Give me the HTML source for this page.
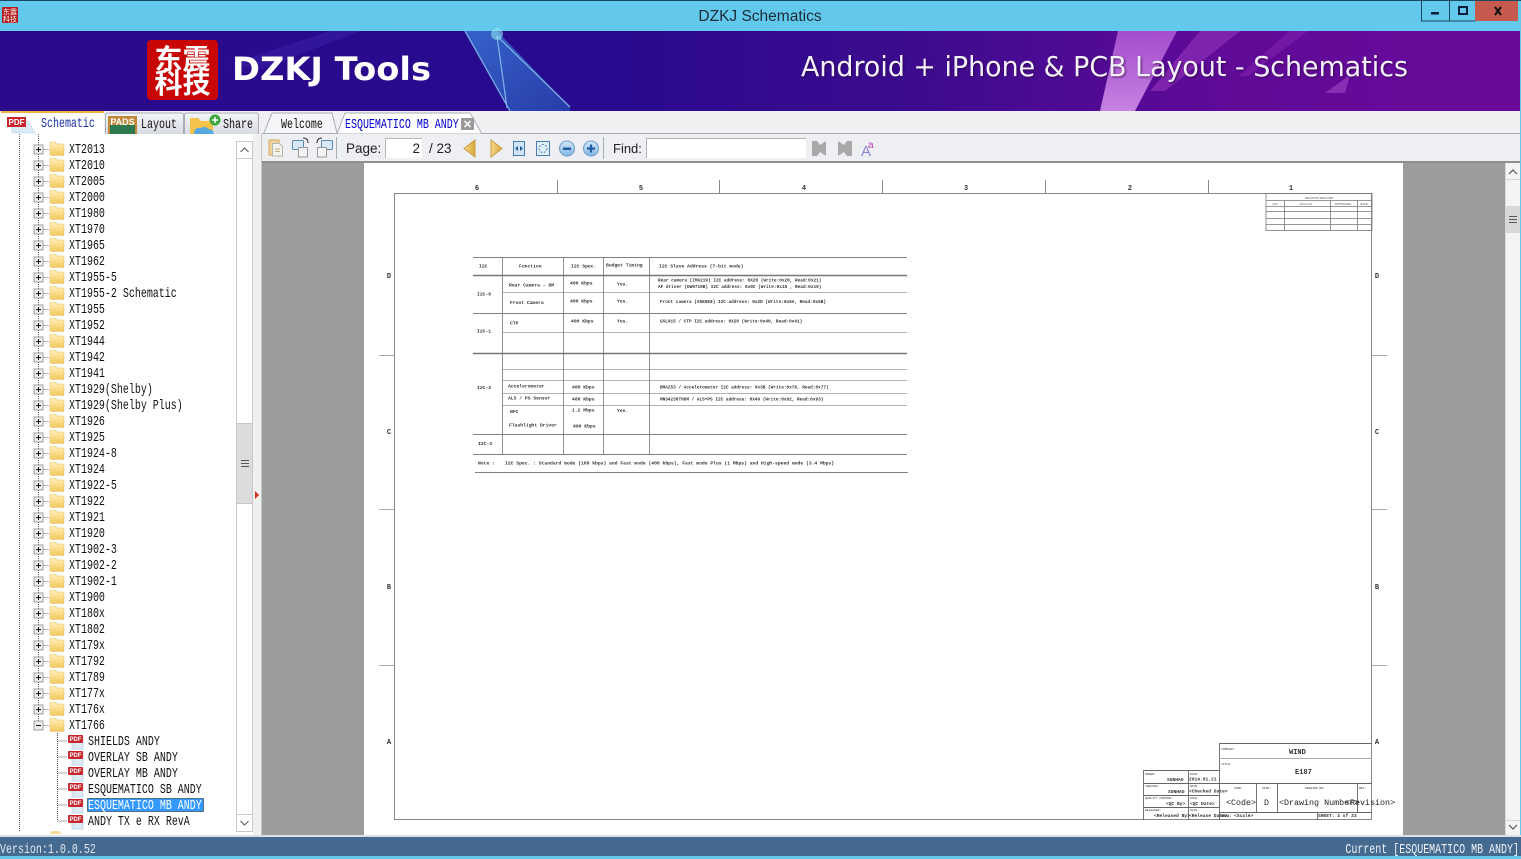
<!DOCTYPE html>
<html><head><meta charset="utf-8"><title>DZKJ Schematics</title>
<style>
html,body{margin:0;padding:0;background:#fff;width:1521px;height:859px;overflow:hidden}
svg{display:block}
.m{font-family:"Liberation Mono",monospace;font-size:13.5px;fill:#111;transform-box:fill-box;transform-origin:0 50%;transform:scaleX(.74)}
.me{transform-origin:100% 50%}
.s{font-family:"Liberation Sans",sans-serif}
.t{font-family:"Liberation Mono",monospace;fill:#333;font-weight:bold}
</style></head><body>
<svg width="1521" height="859" viewBox="0 0 1521 859" xmlns="http://www.w3.org/2000/svg">
<defs>
<linearGradient id="ban" x1="0" x2="1" y1="0" y2="0"><stop offset="0" stop-color="#2c0a8c"/><stop offset=".38" stop-color="#270a8e"/><stop offset=".6" stop-color="#3c0b8f"/><stop offset=".8" stop-color="#5f0a98"/><stop offset="1" stop-color="#6a0a9b"/></linearGradient>
<linearGradient id="fold" x1="0" x2="0" y1="0" y2="1"><stop offset="0" stop-color="#fff0b8"/><stop offset="1" stop-color="#f5c860"/></linearGradient>
<linearGradient id="gtab" x1="0" x2="0" y1="0" y2="1"><stop offset="0" stop-color="#f4f5f8"/><stop offset="1" stop-color="#d8dbe2"/></linearGradient>
<linearGradient id="orb" x1="0" x2="0" y1="0" y2="1"><stop offset="0" stop-color="#d5e8f8"/><stop offset="1" stop-color="#7fb6e4"/></linearGradient>
<linearGradient id="arr" x1="0" x2="1" y1="0" y2="0"><stop offset="0" stop-color="#f7dc8c"/><stop offset="1" stop-color="#d8a63c"/></linearGradient>
<linearGradient id="pink" x1="0" x2="0" y1="0" y2="1"><stop offset="0" stop-color="#a850d0"/><stop offset="1" stop-color="#cc88e6"/></linearGradient>
<linearGradient id="tri" x1="0" x2="1" y1="0" y2="1"><stop offset="0" stop-color="#3a78d8"/><stop offset="1" stop-color="#2848b0"/></linearGradient>
<g id="f"><path d="M0 -6q0 -1 1 -1h4l2 2h6q1 0 1 1v9.500q0 1 -1 1h-12q-1 0 -1 -1z" fill="url(#fold)" stroke="#e2c070" stroke-width=".6"/></g>
<g id="p"><rect x="-4.500" y="-4.500" width="9" height="9" fill="#ececec" stroke="#a0a0a0"/><path d="M-2.500 0h5M0 -2.500v5" stroke="#111"/><path d="M5 0h6" stroke="#777" stroke-dasharray="1 1"/></g>
<g id="d"><rect x="4" y="-4" width="11" height="13" fill="#dbeaf5" stroke="#a8c6de" stroke-width=".6"/><rect x="0" y="-5" width="15" height="8" rx="1" fill="#c8242c"/><text x="7.500" y="1" font-size="6" font-weight="bold" text-anchor="middle" fill="#fff" class="s">PDF</text></g>
</defs>

<rect width="1521" height="859" fill="#f0f0f0"/>
<!-- title bar -->
<rect width="1521" height="31" fill="#62c9ec"/>
<rect width="1521" height="1" fill="#174a62"/>
<rect x="2" y="7" width="16" height="16" rx="1" fill="#b51a1a"/>
<text x="10" y="14" font-size="7" fill="#fff" text-anchor="middle" font-family="'Liberation Sans','Noto Sans CJK SC',sans-serif">东震</text>
<text x="10" y="21.500" font-size="7" fill="#fff" text-anchor="middle" font-family="'Liberation Sans','Noto Sans CJK SC',sans-serif">科技</text>
<text x="760" y="21" font-size="15.500" text-anchor="middle" fill="#1c2c38" class="s">DZKJ Schematics</text>
<rect x="1475" y="1" width="43" height="20" fill="#c75a4e"/>
<path d="M1421.500 1v20h54M1449.500 1v20" fill="none" stroke="#18465c"/>
<rect x="1431" y="12" width="8" height="2.500" fill="#0c1c3c"/>
<rect x="1459" y="7" width="8" height="7" fill="none" stroke="#0c1c3c" stroke-width="2"/>
<path d="M1495 7l6 8M1501 7l-6 8" stroke="#111" stroke-width="2"/>

<!-- banner -->
<rect y="31" width="1521" height="80" fill="url(#ban)"/>
<path d="M230 64L330 31h30L260 70z" fill="#3a20a8" opacity=".5"/>
<path d="M465 31h32L570 107V111H510z" fill="url(#tri)" opacity=".8"/>
<path d="M465 31L510 111M497 36L507 108M497 36L570 107" stroke="#8cc8f4" stroke-width="1.300" opacity=".8" fill="none"/>
<circle cx="497" cy="34" r="6" fill="#8ee8f0" opacity=".6"/>
<path d="M1118 31h59l-42 80h-35z" fill="url(#pink)" opacity=".95"/>
<path d="M1200 31h40l-75 60h-15z" fill="#8a2cb4" opacity=".75"/>
<path d="M1290 31h18l-60 45h-10z" fill="#7a1cac" opacity=".7"/>
<path d="M1325 93l25 -18 -5 18z" fill="#8e38bc" opacity=".8"/>
<rect x="147" y="40" width="71" height="60" rx="4" fill="#c80606"/>
<text x="182.500" y="69" font-size="28" font-weight="bold" fill="#fff" text-anchor="middle" font-family="'Noto Sans CJK SC',sans-serif">东震</text>
<text x="182.500" y="93" font-size="28" font-weight="bold" fill="#fff" text-anchor="middle" font-family="'Noto Sans CJK SC',sans-serif">科技</text>
<text x="232" y="80" font-size="32" font-weight="bold" fill="#fff" font-family="'DejaVu Sans',sans-serif" textLength="199" lengthAdjust="spacingAndGlyphs">DZKJ Tools</text>
<text x="801" y="76" font-size="27.500" fill="#f4f0fa" font-family="'DejaVu Sans',sans-serif" textLength="607" lengthAdjust="spacingAndGlyphs" style="filter:drop-shadow(1px 1px 1px rgba(40,0,60,.7))">Android + iPhone &amp; PCB Layout - Schematics</text>

<!-- tabs strip -->
<rect y="111" width="1521" height="23" fill="#f0f0f2"/>
<path d="M262 133.500H1521" stroke="#a8aeb6"/>
<path d="M0 134V113q0 -2 2 -2h100q2 0 2 2v21z" fill="#fff"/>
<rect x="1" y="111" width="103" height="2" fill="#f0b040"/>
<path d="M105.500 134V115q0 -2 2 -2h74q2 0 2 2v19M184.500 134V115q0 -2 2 -2h70q2 0 2 2v19" fill="url(#gtab)" stroke="#a8aeb6"/>
<path d="M12 121h16l7 12H12z" fill="#dceaf6" stroke="#b8cfe2" stroke-width=".6"/>
<rect x="7" y="117" width="19" height="10" fill="#c8242c"/><text x="16.500" y="125" font-size="8" font-weight="bold" text-anchor="middle" fill="#fff" class="s">PDF</text>
<text x="41" y="127" class="m" style="fill:#1a2ea0">Schematic</text>
<rect x="108" y="116" width="29" height="18" fill="#c08838"/><rect x="110" y="125" width="25" height="9" fill="#2e7a50"/>
<text x="122.500" y="125" font-size="9" font-weight="bold" text-anchor="middle" fill="#fff" class="s">PADS</text>
<text x="141" y="128" class="m">Layout</text>
<path d="M190 118h8l3 3h12v13h-23z" fill="#f5c24a"/><path d="M194 134q0 -7 7 -6q4 -3 7 1q5 0 6 5z" fill="#55a8e0"/>
<circle cx="215" cy="120" r="5.500" fill="#3aa83a"/><path d="M212 120h6M215 117v6" stroke="#fff" stroke-width="1.500"/>
<text x="223" y="128" class="m">Share</text>
<path d="M264 133l8 -20h60l5 20" fill="#f6f6f8" stroke="#a8aeb6"/>
<text x="281" y="128" class="m">Welcome</text>
<path d="M337 134l8 -21h125l12 21z" fill="#fff" stroke="#a8aeb6"/>
<text x="345" y="128" class="m" style="fill:#0000d0">ESQUEMATICO MB ANDY</text>
<rect x="461" y="118" width="13" height="12" fill="#9a9a9a"/><path d="M464.500 121l6 6M470.500 121l-6 6" stroke="#fff" stroke-width="1.500"/>

<!-- left panel -->
<rect y="134" width="262" height="702" fill="#fff"/>
<rect x="253" y="134" width="9" height="702" fill="#f0f0f0"/>
<path d="M261.500 134V836" stroke="#c8c8c8"/>
<path d="M255 491l4 4 -4 4z" fill="#d83020"/>
<path d="M19.500 134V832M38.500 134V725M57.500 733V821M57.500 741h10M57.500 757h10M57.500 773h10M57.500 789h10M57.500 805h10M57.500 821h10" stroke="#555" stroke-dasharray="1 1" fill="none"/>
<g>
<use href="#p" x="38.500" y="149.500"/><use href="#f" x="50" y="149"/><text x="69" y="153" class="m">XT2013</text>
<use href="#p" x="38.500" y="165.500"/><use href="#f" x="50" y="165"/><text x="69" y="169" class="m">XT2010</text>
<use href="#p" x="38.500" y="181.500"/><use href="#f" x="50" y="181"/><text x="69" y="185" class="m">XT2005</text>
<use href="#p" x="38.500" y="197.500"/><use href="#f" x="50" y="197"/><text x="69" y="201" class="m">XT2000</text>
<use href="#p" x="38.500" y="213.500"/><use href="#f" x="50" y="213"/><text x="69" y="217" class="m">XT1980</text>
<use href="#p" x="38.500" y="229.500"/><use href="#f" x="50" y="229"/><text x="69" y="233" class="m">XT1970</text>
<use href="#p" x="38.500" y="245.500"/><use href="#f" x="50" y="245"/><text x="69" y="249" class="m">XT1965</text>
<use href="#p" x="38.500" y="261.500"/><use href="#f" x="50" y="261"/><text x="69" y="265" class="m">XT1962</text>
<use href="#p" x="38.500" y="277.500"/><use href="#f" x="50" y="277"/><text x="69" y="281" class="m">XT1955-5</text>
<use href="#p" x="38.500" y="293.500"/><use href="#f" x="50" y="293"/><text x="69" y="297" class="m">XT1955-2 Schematic</text>
<use href="#p" x="38.500" y="309.500"/><use href="#f" x="50" y="309"/><text x="69" y="313" class="m">XT1955</text>
<use href="#p" x="38.500" y="325.500"/><use href="#f" x="50" y="325"/><text x="69" y="329" class="m">XT1952</text>
<use href="#p" x="38.500" y="341.500"/><use href="#f" x="50" y="341"/><text x="69" y="345" class="m">XT1944</text>
<use href="#p" x="38.500" y="357.500"/><use href="#f" x="50" y="357"/><text x="69" y="361" class="m">XT1942</text>
<use href="#p" x="38.500" y="373.500"/><use href="#f" x="50" y="373"/><text x="69" y="377" class="m">XT1941</text>
<use href="#p" x="38.500" y="389.500"/><use href="#f" x="50" y="389"/><text x="69" y="393" class="m">XT1929(Shelby)</text>
<use href="#p" x="38.500" y="405.500"/><use href="#f" x="50" y="405"/><text x="69" y="409" class="m">XT1929(Shelby Plus)</text>
<use href="#p" x="38.500" y="421.500"/><use href="#f" x="50" y="421"/><text x="69" y="425" class="m">XT1926</text>
<use href="#p" x="38.500" y="437.500"/><use href="#f" x="50" y="437"/><text x="69" y="441" class="m">XT1925</text>
<use href="#p" x="38.500" y="453.500"/><use href="#f" x="50" y="453"/><text x="69" y="457" class="m">XT1924-8</text>
<use href="#p" x="38.500" y="469.500"/><use href="#f" x="50" y="469"/><text x="69" y="473" class="m">XT1924</text>
<use href="#p" x="38.500" y="485.500"/><use href="#f" x="50" y="485"/><text x="69" y="489" class="m">XT1922-5</text>
<use href="#p" x="38.500" y="501.500"/><use href="#f" x="50" y="501"/><text x="69" y="505" class="m">XT1922</text>
<use href="#p" x="38.500" y="517.500"/><use href="#f" x="50" y="517"/><text x="69" y="521" class="m">XT1921</text>
<use href="#p" x="38.500" y="533.500"/><use href="#f" x="50" y="533"/><text x="69" y="537" class="m">XT1920</text>
<use href="#p" x="38.500" y="549.500"/><use href="#f" x="50" y="549"/><text x="69" y="553" class="m">XT1902-3</text>
<use href="#p" x="38.500" y="565.500"/><use href="#f" x="50" y="565"/><text x="69" y="569" class="m">XT1902-2</text>
<use href="#p" x="38.500" y="581.500"/><use href="#f" x="50" y="581"/><text x="69" y="585" class="m">XT1902-1</text>
<use href="#p" x="38.500" y="597.500"/><use href="#f" x="50" y="597"/><text x="69" y="601" class="m">XT1900</text>
<use href="#p" x="38.500" y="613.500"/><use href="#f" x="50" y="613"/><text x="69" y="617" class="m">XT180x</text>
<use href="#p" x="38.500" y="629.500"/><use href="#f" x="50" y="629"/><text x="69" y="633" class="m">XT1802</text>
<use href="#p" x="38.500" y="645.500"/><use href="#f" x="50" y="645"/><text x="69" y="649" class="m">XT179x</text>
<use href="#p" x="38.500" y="661.500"/><use href="#f" x="50" y="661"/><text x="69" y="665" class="m">XT1792</text>
<use href="#p" x="38.500" y="677.500"/><use href="#f" x="50" y="677"/><text x="69" y="681" class="m">XT1789</text>
<use href="#p" x="38.500" y="693.500"/><use href="#f" x="50" y="693"/><text x="69" y="697" class="m">XT177x</text>
<use href="#p" x="38.500" y="709.500"/><use href="#f" x="50" y="709"/><text x="69" y="713" class="m">XT176x</text>
<rect x="34" y="721" width="9" height="9" fill="#ececec" stroke="#a0a0a0"/><path d="M36 725.500h5" stroke="#111"/><path d="M43.500 725.500h6" stroke="#777" stroke-dasharray="1 1"/><use href="#f" x="50" y="725"/><text x="69" y="729" class="m">XT1766</text>
<use href="#d" x="68" y="740"/><text x="88" y="745" class="m">SHIELDS ANDY</text>
<use href="#d" x="68" y="756"/><text x="88" y="761" class="m">OVERLAY SB ANDY</text>
<use href="#d" x="68" y="772"/><text x="88" y="777" class="m">OVERLAY MB ANDY</text>
<use href="#d" x="68" y="788"/><text x="88" y="793" class="m">ESQUEMATICO SB ANDY</text>
<use href="#d" x="68" y="804"/><rect x="87.500" y="798.500" width="116" height="13" fill="#3399ff" stroke="#111" stroke-dasharray="1 1"/><text x="88" y="809" class="m" style="fill:#fff">ESQUEMATICO MB ANDY</text>
<use href="#d" x="68" y="820"/><text x="88" y="825" class="m">ANDY TX e RX RevA</text>
<path d="M50 834q0 -3 3 -3h6l2 2v1z" fill="#f5dc98"/>
</g>
<!-- tree scrollbar -->
<rect x="236.500" y="141.500" width="16" height="690" fill="#fff" stroke="#c8c8c8"/>
<path d="M236.500 158.500h16M236.500 814.500h16" stroke="#c8c8c8"/>
<path d="M240.500 152l4 -4 4 4M240.500 821l4 4 4 -4" fill="none" stroke="#666" stroke-width="1.200"/>
<rect x="236.500" y="423.500" width="16" height="80" fill="#dcdcdc" stroke="#c8c8c8"/>
<path d="M241 460.500h8M241 463.500h8M241 466.500h8" stroke="#555"/>

<!-- toolbar -->
<rect x="262" y="134" width="1259" height="28" fill="#eeeff2"/>
<rect x="269" y="140" width="10" height="15" fill="#f2d49a" stroke="#d4a860"/><path d="M272.500 143.500h7l3 3v9.500h-10z" fill="#f4f4ec" stroke="#b0b8b0"/><path d="M275 149h5M275 151.500h5" stroke="#c0b080"/>
<rect x="292.500" y="140.500" width="11" height="9" rx="1" fill="#d8e8f6" stroke="#5a8ab0"/><rect x="298.500" y="147.500" width="9" height="9.500" fill="#f4f4f4" stroke="#999"/><path d="M303 138q5 0 5 5" fill="none" stroke="#333"/>
<rect x="321.500" y="140.500" width="11" height="9" rx="1" fill="#d8e8f6" stroke="#5a8ab0"/><rect x="317.500" y="147.500" width="9" height="9.500" fill="#f4f4f4" stroke="#999"/><path d="M322 138q-5 0 -5 5" fill="none" stroke="#333"/>
<path d="M336.500 137V159M603.500 137V159" stroke="#a8aeb6"/>
<text x="346" y="153" font-size="13.500" fill="#222" class="s">Page:</text>
<rect x="385" y="138" width="37" height="20" fill="#fff"/><path d="M385.500 158V138.500H422" fill="none" stroke="#b8b8b8"/>
<text x="420" y="153" font-size="13.500" fill="#222" text-anchor="end" class="s">2</text>
<text x="429" y="153" font-size="13.500" fill="#222" class="s">/ 23</text>
<path d="M475 140v17l-11 -8.500z" fill="url(#arr)" stroke="#c89c40"/>
<path d="M491 140v17l11 -8.500z" fill="url(#arr)" stroke="#c89c40"/>
<rect x="513.500" y="141.500" width="11" height="14" fill="#d0e4f6" stroke="#4a7eb0"/><path d="M518 146l-3 2.500 3 2.500zM520 146l3 2.500 -3 2.500z" fill="#225a90"/>
<rect x="536.500" y="141.500" width="13" height="14" fill="#e0eefa" stroke="#4a7eb0"/><circle cx="543" cy="148.500" r="4" fill="none" stroke="#4a7eb0" stroke-dasharray="2 1.500"/>
<circle cx="567" cy="148.500" r="7.500" fill="url(#orb)" stroke="#6a9cc8"/><rect x="563" y="147.500" width="8" height="2.500" fill="#1f5f9f"/>
<circle cx="591" cy="148.500" r="7.500" fill="url(#orb)" stroke="#6a9cc8"/><path d="M587 148.500h8M591 144.500v8" stroke="#1f5f9f" stroke-width="2.200"/>
<text x="613" y="153" font-size="13" fill="#222" class="s">Find:</text>
<rect x="646" y="138" width="160" height="20" fill="#fff"/><path d="M646.500 158V138.500H806" fill="none" stroke="#b0b0b0"/>
<path d="M812 141h5l3 4 6 -4v15l-6 -4 -3 4h-5z" fill="#a8a8a8"/>
<path d="M852 141h-5l-3 4 -6 -4v15l6 -4 3 4h5z" fill="#a8a8a8"/>
<text x="861" y="156" font-size="15" fill="#8a86d8" class="s">A</text><text x="868" y="148" font-size="10" fill="#c040b8" class="s">a</text>

<!-- doc area -->
<rect x="262" y="162" width="1243" height="674" fill="#9c9c9c"/>
<rect x="262" y="161" width="1259" height="2" fill="#8f8f8f"/>
<rect x="364" y="163" width="1039" height="673" fill="#fff"/>
<!-- right scrollbar -->
<rect x="1505" y="163" width="15" height="673" fill="#f4f4f4"/>
<path d="M1505.500 163V836M1505.500 179.500h15M1505.500 820.500h15" stroke="#d8d8d8"/>
<path d="M1509 174l4 -4 4 4M1509 825l4 4 4 -4" fill="none" stroke="#555" stroke-width="1.200"/>
<rect x="1506" y="206" width="14" height="27" fill="#d8d8d8"/>
<path d="M1509 216.500h8M1509 219.500h8M1509 222.500h8" stroke="#555"/>
<rect x="1520" y="31" width="1" height="828" fill="#62c9ec"/>

<!-- schematic frame -->
<g fill="none" stroke="#666" stroke-width="1">
<rect x="394.500" y="193.500" width="977" height="626" stroke="#888"/>
<path d="M557.500 180V193M719.500 180V193M882.500 180V193M1045.500 180V193M1208.500 180V193" stroke="#888"/>
<path d="M379 355.500h15M379 509.500h15M379 665.500h15M1372 355.500h15M1372 509.500h15M1372 665.500h15" stroke="#aaa"/>
</g>
<g class="t" font-size="7" text-anchor="middle">
<text x="477" y="190">6</text><text x="641" y="190">5</text><text x="804" y="190">4</text><text x="966" y="190">3</text><text x="1130" y="190">2</text><text x="1291" y="190">1</text>
<text x="389" y="278">D</text><text x="389" y="434">C</text><text x="389" y="589">B</text><text x="389" y="744">A</text>
<text x="1377" y="278">D</text><text x="1377" y="434">C</text><text x="1377" y="589">B</text><text x="1377" y="744">A</text>
</g>
<!-- revision -->
<g fill="none" stroke="#777" stroke-width=".8">
<rect x="1266" y="193.500" width="106" height="37"/>
<path d="M1266 200.500h106M1266 206.500h106M1266 211.500h106M1266 218.500h106M1266 224.500h106M1284.500 200.500v30M1330.500 200.500v30M1357.500 200.500v30"/>
</g>
<g font-size="3" fill="#555" class="s" text-anchor="middle"><text x="1319" y="199">REVISION RECORD</text><text x="1275" y="205">LTR</text><text x="1306" y="205">ECO NO</text><text x="1343" y="205">APPROVED</text><text x="1364" y="205">DATE</text></g>

<!-- table -->
<g fill="none" stroke="#555" stroke-width=".8">
<path d="M473 257.500H907M473 313.500H907M473 434.500H907M473 454.500H907M475 472.500H908"/>
<path d="M473 275.500H907M473 353.500H907" stroke="#777" stroke-width="1.400"/>
<path d="M503 292.500H907M503 332.500H907M503 369.500H907M503 380.500H907M503 393.500H907M503 405.500H907" stroke="#999"/>
<path d="M502.500 257V454M563.500 257V454M603.500 257V454M649.500 257V454" stroke="#777"/>
</g>
<g font-family="'Liberation Mono',monospace" font-size="4.700" fill="#333" font-weight="bold">
<text x="479" y="267.500">I2C</text><text x="519" y="267.500">Function</text><text x="571" y="267.500">I2C Spec.</text><text x="606" y="266.500">Budget Timing</text><text x="659" y="267.500">I2C Slave Address (7-bit mode)</text>
<text x="477" y="295.500">I2C-0</text><text x="509" y="286.500">Rear Camera - 8M</text><text x="570" y="284.500">400 Kbps</text><text x="617" y="285.500">Yes.</text>
<text x="658" y="281.500" font-size="4.400">Rear camera (IMX219) I2C address: 0X20 (Write:0x20, Read:0x21)</text><text x="658" y="288" font-size="4.400">AF driver (DW9719B) I2C address: 0x0C (Write:0x18 , Read:0x19)</text>
<text x="510" y="304">Front Camera</text><text x="570" y="302.500">400 Kbps</text><text x="617" y="302.500">Yes.</text><text x="660" y="303" font-size="4.400">Front camera (S5K5E8) I2C address: 0x2D (Write:0x5A, Read:0x5B)</text>
<text x="477" y="332.500">I2C-1</text><text x="510" y="324.500">CTP</text><text x="571" y="322.500">400 Kbps</text><text x="617" y="322.500">Yes.</text><text x="660" y="322.500" font-size="4.400">GSL915 / CTP I2C address: 0X20 (Write:0x40, Read:0x41)</text>
<text x="477" y="389">I2C-2</text><text x="508" y="387.500">Accelerometer</text><text x="572" y="388.500">400 Kbps</text><text x="660" y="388.500" font-size="4.400">BMA253 / Accelerometer I2C address: 0x3B (Write:0x76, Read:0x77)</text>
<text x="508" y="399.500">ALS / PS Sensor</text><text x="572" y="400.500">400 Kbps</text><text x="660" y="400.500" font-size="4.400">MN34230THUM / ALS+PS I2C address: 0X49 (Write:0x92, Read:0x93)</text>
<text x="510" y="413">NFC</text><text x="572" y="411.500">1.2 Mbps</text><text x="617" y="412">Yes.</text>
<text x="509" y="426.500">Flashlight Driver</text><text x="573" y="427.500">400 Kbps</text>
<text x="478" y="445">I2C-3</text>
<text x="478" y="464.500">Note :</text><text x="505" y="464.500">I2C Spec. : Standard mode (100 kbps) and Fast mode (400 kbps), Fast mode Plus (1 Mbps) and High-speed mode (3.4 Mbps)</text>
</g>

<!-- title block -->
<g fill="none" stroke="#666" stroke-width=".9">
<path d="M1143.500 820V770.500H1219.500M1219.500 820V743.500H1372M1143 783.500h76M1143 795.500h76M1143 807.500h76M1188.500 770V820M1219 783.500h153M1219 812.500h153M1256.500 783V812M1277.500 783V812M1357.500 783V812M1317.500 812V820"/>
<path d="M1219 758.500h153" stroke="#aaa"/>
</g>
<g font-family="'Liberation Mono',monospace" fill="#333">
<g font-size="3">
<text x="1145" y="775">DRAWN:</text><text x="1190" y="775">DATE:</text><text x="1145" y="787">CHECKED:</text><text x="1190" y="787">DATE:</text><text x="1145" y="799">QUALITY CONTROL:</text><text x="1190" y="799">DATE:</text><text x="1145" y="811">RELEASED:</text><text x="1190" y="811">DATE:</text><text x="1221" y="750">COMPANY:</text><text x="1221" y="765">TITLE:</text><text x="1234" y="789">CODE:</text><text x="1262" y="789">SIZE:</text><text x="1305" y="789">DRAWING NO:</text><text x="1359" y="789">REV:</text>
</g>
<g font-size="4.600" font-weight="bold">
<text x="1167" y="781">SUNHAO</text><text x="1189" y="780.500">2014.01.21</text><text x="1168" y="793">SUNHAO</text><text x="1189" y="792.500">&lt;Checked Date&gt;</text><text x="1166" y="805">&lt;QC By&gt;</text><text x="1190" y="805">&lt;QC Date&gt;</text><text x="1154" y="817">&lt;Released By&gt;</text><text x="1189" y="817">&lt;Release Date&gt;</text><text x="1221" y="817">mmu:</text><text x="1234" y="817">&lt;Scale&gt;</text><text x="1318" y="817">SHEET: 2 of 23</text>
</g>
<g font-weight="bold"><text x="1289" y="754" font-size="7">WIND</text><text x="1295" y="774" font-size="7">E187</text></g>
<g font-size="8.350" fill="#222"><text x="1226" y="805">&lt;Code&gt;</text><text x="1264" y="805">D</text><text x="1279" y="805">&lt;Drawing Number&gt;</text><text x="1345" y="805">&lt;Revision&gt;</text></g>
</g>

<!-- status bar -->
<rect y="835" width="1521" height="2" fill="#d8e0e8"/>
<rect y="837" width="1521" height="19" fill="#456a90"/>
<rect y="856" width="1521" height="3" fill="#62c9ec"/>
<text x="0" y="853" class="m" style="fill:#dfe6ee">Version:1.0.0.52</text>
<text x="1519" y="853" class="m me" text-anchor="end" style="fill:#eef2f6">Current [ESQUEMATICO MB ANDY]</text>
</svg>
</body></html>
